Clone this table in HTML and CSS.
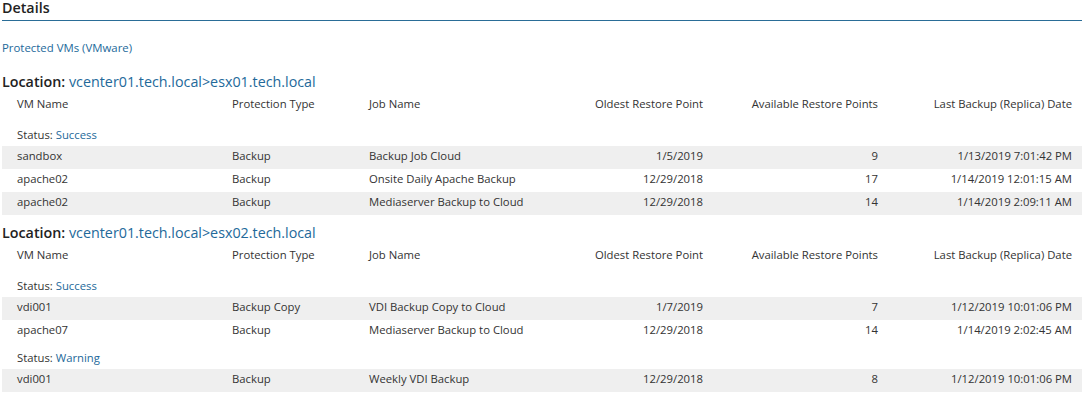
FILE: index.html
```html
<!DOCTYPE html>
<html lang="en">
<head>
<meta charset="utf-8">
<title>Details</title>
<link rel="stylesheet" href="styles.css">
</head>
<body>
<div class="page">
  <h1 class="title">Details</h1>
  <div class="subtitle">Protected VMs (VMware)</div>

  <section class="location">
    <h2 class="loc-title">Location: <span class="link">vcenter01.tech.local&gt;esx01.tech.local</span></h2>
    <div class="row head">
      <div class="c l">VM Name</div><div class="c l">Protection Type</div><div class="c l">Job Name</div>
      <div class="c r">Oldest Restore Point</div><div class="c r">Available Restore Points</div><div class="c r">Last Backup (Replica) Date</div>
    </div>
    <div class="status">Status: <span class="link">Success</span></div>
    <div class="row alt">
      <div class="c l">sandbox</div><div class="c l">Backup</div><div class="c l">Backup Job Cloud</div>
      <div class="c r">1/5/2019</div><div class="c r">9</div><div class="c r">1/13/2019 7:01:42 PM</div>
    </div>
    <div class="row">
      <div class="c l">apache02</div><div class="c l">Backup</div><div class="c l">Onsite Daily Apache Backup</div>
      <div class="c r">12/29/2018</div><div class="c r">17</div><div class="c r">1/14/2019 12:01:15 AM</div>
    </div>
    <div class="row alt">
      <div class="c l">apache02</div><div class="c l">Backup</div><div class="c l">Mediaserver Backup to Cloud</div>
      <div class="c r">12/29/2018</div><div class="c r">14</div><div class="c r">1/14/2019 2:09:11 AM</div>
    </div>
  </section>

  <section class="location second">
    <h2 class="loc-title">Location: <span class="link">vcenter01.tech.local&gt;esx02.tech.local</span></h2>
    <div class="row head">
      <div class="c l">VM Name</div><div class="c l">Protection Type</div><div class="c l">Job Name</div>
      <div class="c r">Oldest Restore Point</div><div class="c r">Available Restore Points</div><div class="c r">Last Backup (Replica) Date</div>
    </div>
    <div class="status">Status: <span class="link">Success</span></div>
    <div class="row alt">
      <div class="c l">vdi001</div><div class="c l">Backup Copy</div><div class="c l">VDI Backup Copy to Cloud</div>
      <div class="c r">1/7/2019</div><div class="c r">7</div><div class="c r">1/12/2019 10:01:06 PM</div>
    </div>
    <div class="row">
      <div class="c l">apache07</div><div class="c l">Backup</div><div class="c l">Mediaserver Backup to Cloud</div>
      <div class="c r">12/29/2018</div><div class="c r">14</div><div class="c r">1/14/2019 2:02:45 AM</div>
    </div>
    <div class="status">Status: <span class="link">Warning</span></div>
    <div class="row alt">
      <div class="c l">vdi001</div><div class="c l">Backup</div><div class="c l">Weekly VDI Backup</div>
      <div class="c r">12/29/2018</div><div class="c r">8</div><div class="c r">1/12/2019 10:01:06 PM</div>
    </div>
  </section>
</div>
</body>
</html>
```

FILE: styles.css
```css
html, body {
  margin: 0;
  padding: 0;
  background: #ffffff;
}

body {
  font-family: "Open Sans", "Noto Sans", "Liberation Sans", sans-serif;
  color: #333333;
  font-size: 11.3px;
}

.page {
  width: 1080px;
  padding: 0 4px 0 2px;
}

.title {
  margin: 0;
  height: 20px;
  line-height: 15px;
  font-size: 14.3px;
  font-weight: 600;
  color: #222222;
  border-bottom: 1px solid #2a6d97;
}

.subtitle {
  margin-top: 19px;
  height: 16px;
  line-height: 16px;
  font-size: 11.4px;
  color: #23699a;
}

.location {
  margin-top: 15px;
}

.location.second {
  margin-top: 7px;
}

.loc-title {
  margin: 0;
  height: 22px;
  line-height: 21px;
  font-size: 14.3px;
  font-weight: 600;
  color: #222222;
}

.loc-title .link {
  font-weight: 400;
}

.link {
  color: #23699a;
}

.row {
  display: grid;
  grid-template-columns: 215px 137px 206px 153px 175px 194px;
  height: 23px;
  align-items: center;
  line-height: 20px;
}

.row.head {
  height: 22px;
  margin-bottom: 5px;
}

.row.alt {
  background: #efefef;
}

.c {
  padding: 0 10px 3px 15px;
  white-space: nowrap;
  overflow: hidden;
}

.row.head .c {
  padding-bottom: 1px;
}

.c.r {
  text-align: right;
}

.status {
  padding: 4px 0 0 15px;
  height: 22px;
  line-height: 21px;
}
```
